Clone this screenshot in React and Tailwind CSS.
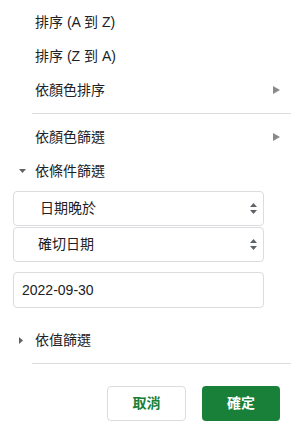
import React from 'react';

const font = { fontFamily: '"Liberation Sans", "Noto Sans CJK TC", Arial, sans-serif' };

const SubArrow = () => (
  <svg width="7" height="8" viewBox="0 0 7 8" className="text-[#8a8a8a]">
    <path d="M0 0 L7 4 L0 8 Z" fill="currentColor" />
  </svg>
);

const UpDown = () => (
  <svg width="7" height="11" viewBox="0 0 7 11" className="text-[#5f6368]">
    <path d="M0 4 L3.5 0 L7 4 Z M0 7 L3.5 11 L7 7 Z" fill="currentColor" />
  </svg>
);

const MenuRow = ({ label, arrow }) => (
  <div className="flex h-[34px] items-center justify-between pl-[35px] pr-[11px] text-[14px] text-[#202124]">
    <span>{label}</span>
    {arrow && <SubArrow />}
  </div>
);

const Section = ({ label, open }) => (
  <div className="flex h-[34px] items-center pl-[19px] text-[14px] text-[#202124]">
    <span className="flex w-[16px] items-center">
      {open ? (
        <svg width="7" height="4" viewBox="0 0 7 4" className="text-[#5f6368]">
          <path d="M0 0 L7 0 L3.5 4 Z" fill="currentColor" />
        </svg>
      ) : (
        <svg width="4" height="7" viewBox="0 0 4 7" className="text-[#5f6368]">
          <path d="M0 0 L4 3.5 L0 7 Z" fill="currentColor" />
        </svg>
      )}
    </span>
    <span>{label}</span>
  </div>
);

const Select = ({ label, pad }) => (
  <div className={`flex h-[35px] items-center justify-between rounded-[4px] border border-[#dadce0] pr-[6px] text-[14px] text-[#202124] ${pad}`}>
    <span>{label}</span>
    <UpDown />
  </div>
);

export default function App() {
  return (
    <div className="w-[291px] h-[435px] bg-white overflow-hidden" style={font}>
      <div className="pt-[5px]">
        <MenuRow label="排序 (A 到 Z)" />
        <MenuRow label="排序 (Z 到 A)" />
        <MenuRow label="依顏色排序" arrow />
        <div className="ml-[32px] my-[6px] h-px bg-[#dadce0]" />
        <MenuRow label="依顏色篩選" arrow />
        <Section label="依條件篩選" open />
        <div className="mt-[3px] mr-[27px] ml-[13px] flex flex-col gap-[1px]">
          <Select label="日期晚於" pad="pl-[26px]" />
          <Select label="確切日期" pad="pl-[24px]" />
          <div className="mt-[9px] flex h-[36px] items-center rounded-[4px] border border-[#dadce0] pl-[8px] text-[14px] text-[#202124]">
            2022-09-30
          </div>
        </div>
        <div className="mt-[15px]">
          <Section label="依值篩選" />
        </div>
        <div className="ml-[32px] mt-[6px] h-px bg-[#dadce0]" />
        <div className="mt-[22px] flex justify-end gap-[16px] pr-[11px]">
          <button className="h-[35px] w-[79px] rounded-[4px] border border-[#dadce0] bg-white text-[14px] font-bold text-[#188038]">
            取消
          </button>
          <button className="h-[35px] w-[78px] rounded-[4px] bg-[#188038] text-[14px] font-bold text-white">
            確定
          </button>
        </div>
      </div>
    </div>
  );
}
